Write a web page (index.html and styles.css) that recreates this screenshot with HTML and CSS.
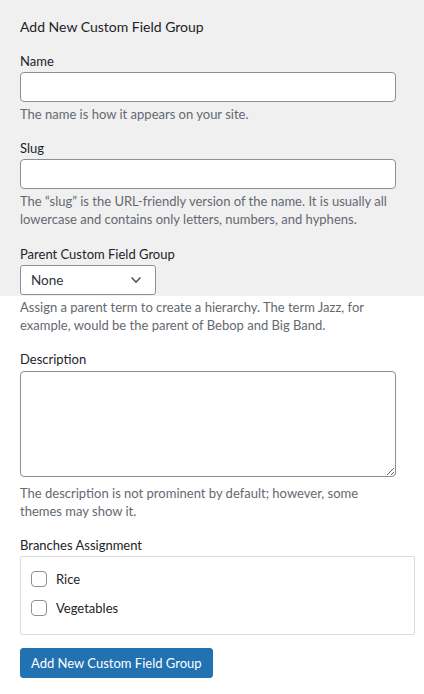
FILE: index.html
```html
<!DOCTYPE html>
<html lang="en">
<head>
<meta charset="utf-8">
<title>Add New Custom Field Group</title>
<link rel="stylesheet" href="styles.css">
</head>
<body>
<form class="term-form">
  <div class="top">
    <h2 class="title">Add New Custom Field Group</h2>
    <div class="field field-name">
      <label class="label" for="tag-name">Name</label>
      <input class="text-input" id="tag-name" type="text">
      <p class="help">The name is how it appears on your site.</p>
    </div>
    <div class="field field-slug">
      <label class="label" for="tag-slug">Slug</label>
      <input class="text-input" id="tag-slug" type="text">
      <p class="help">The “slug” is the URL-friendly version of the name. It is usually all lowercase and contains only letters, numbers, and hyphens.</p>
    </div>
    <div class="field field-parent">
      <label class="label" for="parent">Parent Custom Field Group</label>
      <div class="select">
        <span class="select-value">None</span>
        <svg class="chev" width="12" height="8" viewBox="0 0 12 8"><path d="M1.5 1.5 L6 6 L10.5 1.5" fill="none" stroke="#50575e" stroke-width="1.6"/></svg>
      </div>
    </div>
  </div>
  <div class="bottom">
    <p class="help help-parent">Assign a parent term to create a hierarchy. The term Jazz, for example, would be the parent of Bebop and Big Band.</p>
    <div class="field field-desc">
      <label class="label" for="desc">Description</label>
      <textarea class="textarea" id="desc"></textarea>
      <p class="help help-desc">The description is not prominent by default; however, some themes may show it.</p>
    </div>
    <div class="field field-branches">
      <span class="label">Branches Assignment</span>
      <div class="checklist">
        <label class="check-row"><span class="checkbox"></span><span>Rice</span></label>
        <label class="check-row"><span class="checkbox"></span><span>Vegetables</span></label>
      </div>
    </div>
    <button class="button" type="button">Add New Custom Field Group</button>
  </div>
</form>
</body>
</html>
```
FILE: styles.css
```css
html, body {
  margin: 0;
  padding: 0;
  background: #fff;
}
body {
  font-family: Lato, "Noto Sans", sans-serif;
  font-size: 13px;
  color: #1d2327;
}
.term-form {
  display: block;
}
.top {
  background: #f0f0f1;
  padding: 17px 20px 1px;
}
.bottom {
  padding: 0 20px;
}
.title {
  margin: 0;
  font-size: 14px;
  font-weight: 400;
  line-height: 20px;
  color: #1d2327;
}
.field {
  display: flex;
  flex-direction: column;
  align-items: flex-start;
}
.field-name { margin-top: 15px; }
.field-slug { margin-top: 15px; }
.field-parent { margin-top: 16px; }
.field-desc { margin-top: 15px; }
.field-branches { margin-top: 15px; }
.label {
  display: block;
  line-height: 18px;
  margin-bottom: 2px;
  color: #1d2327;
}
.text-input {
  box-sizing: border-box;
  width: 376px;
  height: 30px;
  margin: 0;
  border: 1px solid #8c8f94;
  border-radius: 4px;
  background: #fff;
  font: inherit;
  padding: 0 8px;
}
.help {
  margin: 3px 0 0;
  line-height: 18.5px;
  color: #646970;
}
.select {
  box-sizing: border-box;
  width: 136px;
  height: 30px;
  border: 1px solid #8c8f94;
  border-radius: 3px;
  background: #fff;
  display: flex;
  align-items: center;
  justify-content: space-between;
  padding: 0 13px 0 10px;
  color: #2c3338;
  font-size: 13.5px;
}
.help-parent {
  margin-top: 2px;
}
.textarea {
  box-sizing: border-box;
  display: block;
  width: 376px;
  height: 106px;
  margin: 1px 0 0;
  border: 1px solid #8c8f94;
  border-radius: 4px;
  background: #fff;
  font: inherit;
  padding: 4px 8px;
}
.help-desc {
  margin-top: 7px;
  max-width: 350px;
}
.checklist {
  box-sizing: border-box;
  width: 395px;
  border: 1px solid #dcdcde;
  border-radius: 2px;
  background: #fff;
  padding: 8px 10px 11px;
  display: flex;
  flex-direction: column;
}
.check-row {
  display: flex;
  align-items: center;
  gap: 9px;
  height: 29px;
  color: #1d2327;
}
.checkbox {
  box-sizing: border-box;
  width: 16px;
  height: 16px;
  border: 1px solid #8c8f94;
  border-radius: 4px;
  background: #fff;
}
.button {
  margin-top: 13px;
  height: 30px;
  padding: 0 10px;
  border: 1px solid #2271b1;
  border-radius: 3px;
  background: #2271b1;
  color: #fff;
  font: inherit;
  font-size: 13px;
  cursor: pointer;
}
```
